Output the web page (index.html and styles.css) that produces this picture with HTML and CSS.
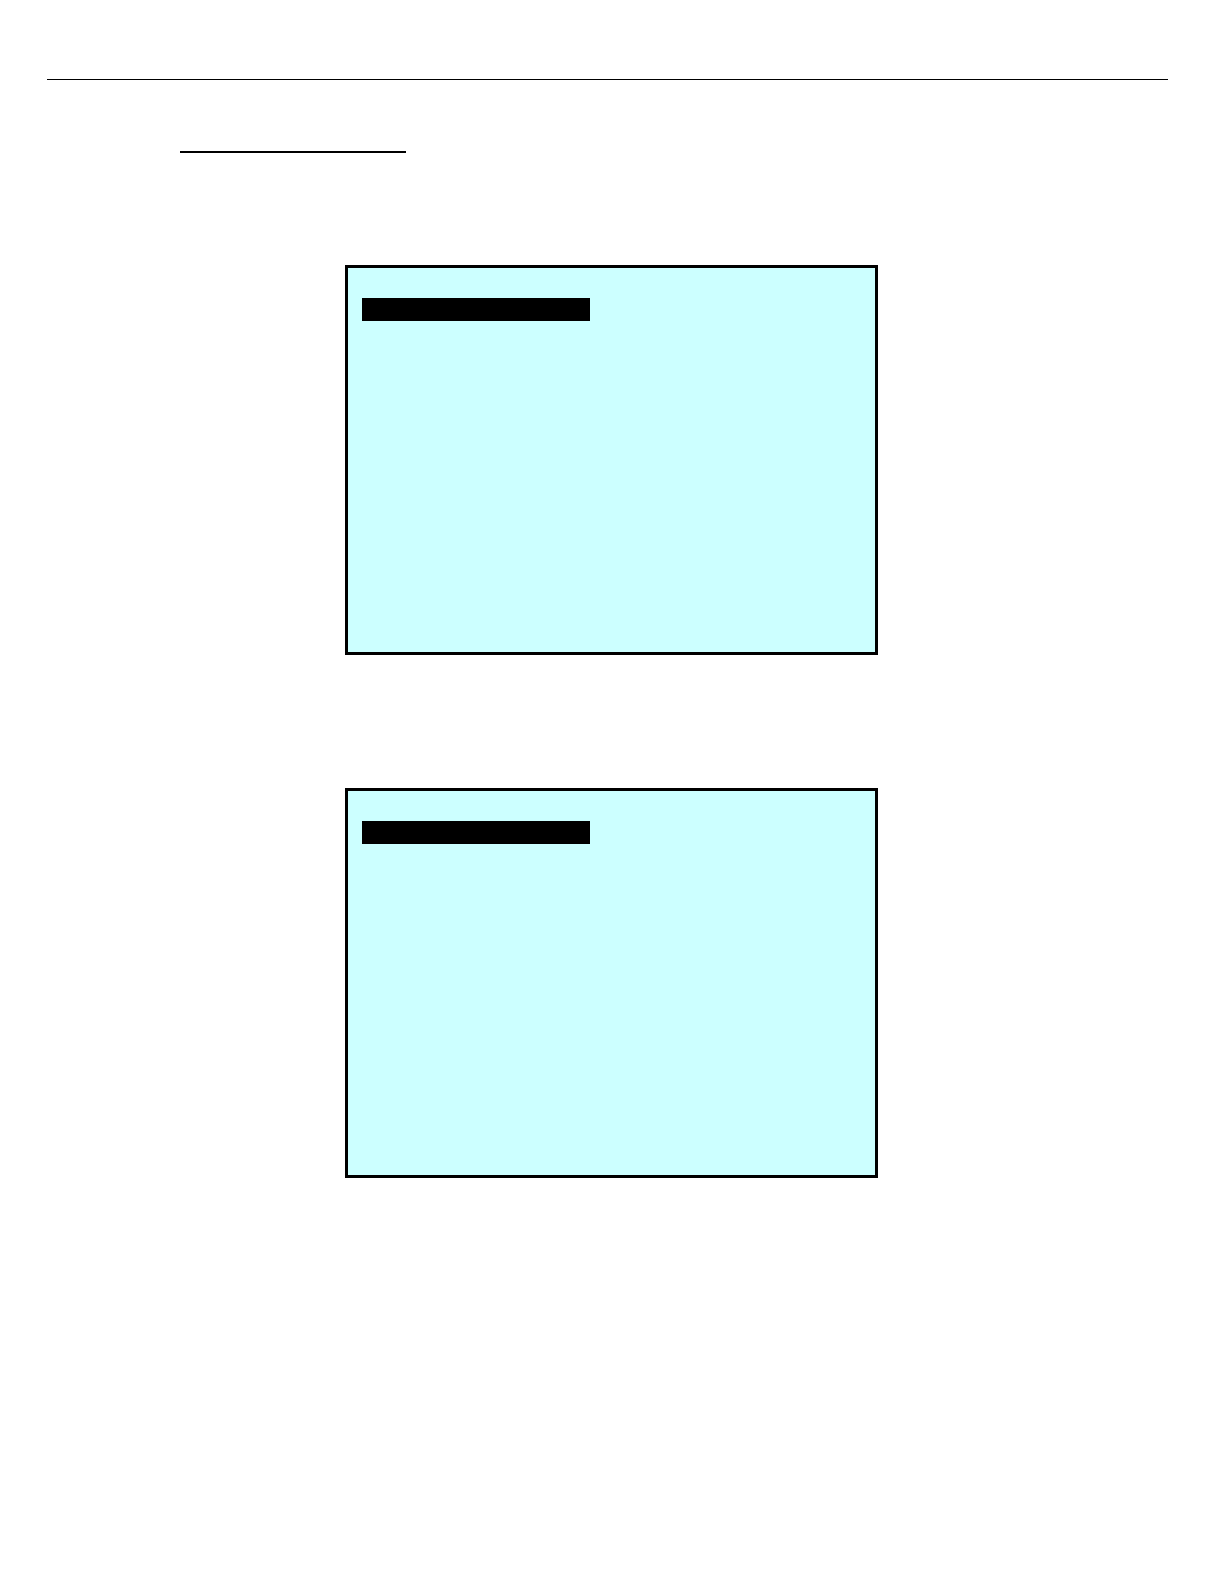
FILE: index.html
```html
<!DOCTYPE html>
<html lang="en">
<head>
<meta charset="utf-8">
<meta name="viewport" content="width=device-width, initial-scale=1">
<link rel="stylesheet" href="styles.css">
</head>
<body>
<header class="page-header"></header>
<main class="content">
  <div class="title-rule"></div>
  <section class="screen"><div class="selected-row"></div></section>
  <section class="screen"><div class="selected-row"></div></section>
</main>
</body>
</html>
```

FILE: styles.css
```css
* {
  box-sizing: border-box;
}

body {
  margin: 0;
  min-height: 100vh;
  background: #ffffff;
  font-family: "Liberation Sans", Arial, sans-serif;
}

.page-header {
  margin: 0 56px 0 47px;
  padding-top: 79px;
  border-bottom: 1px solid #000000;
}

.content {
  padding: 71px 180px 0;
}

.title-rule {
  max-width: 226px;
  margin-bottom: 112px;
  border-top: 2px solid #000000;
}

.screen {
  max-width: 533px;
  min-height: 390px;
  margin: 0 0 133px 165px;
  padding: 30px 14px;
  border: 3px solid #000000;
  background: #ccffff;
}

.screen:last-child {
  margin-bottom: 0;
}

.selected-row {
  max-width: 228px;
  height: 23px;
  background: #000000;
}
```
